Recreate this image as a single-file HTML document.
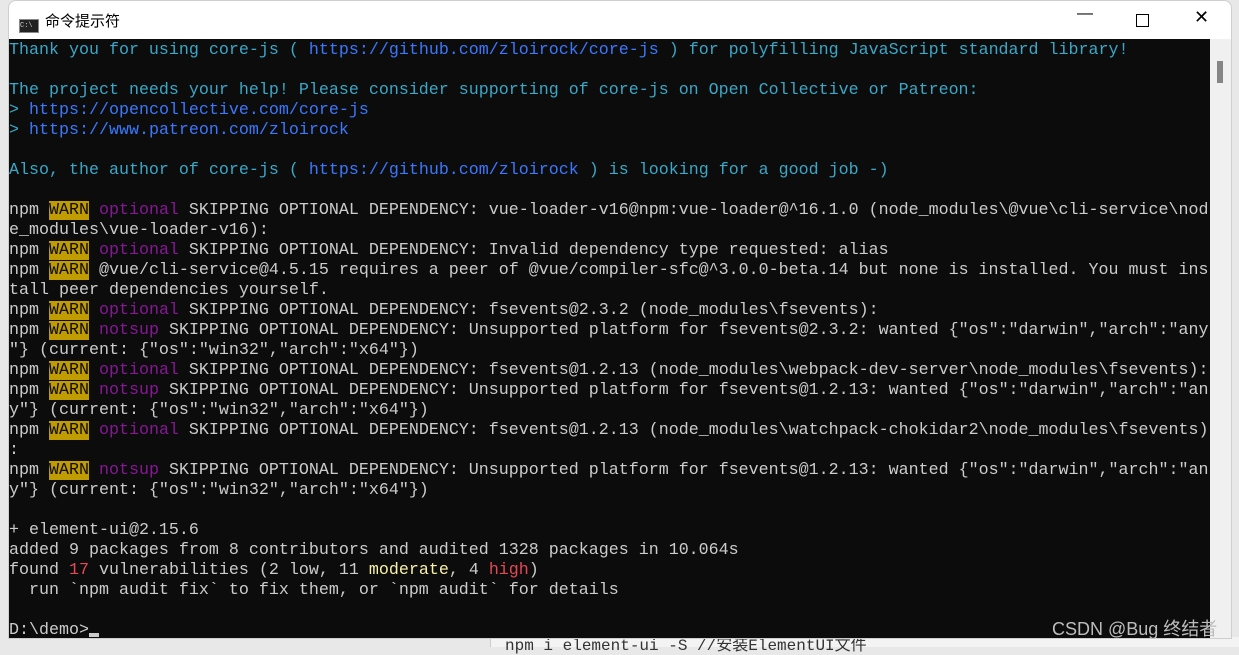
<!DOCTYPE html>
<html><head><meta charset="utf-8"><style>
body{margin:0;width:1239px;height:647px;overflow:hidden;background:#e8e8e8;position:relative;font-family:"Liberation Sans","Noto Sans CJK SC",sans-serif}
.win{position:absolute;left:8px;top:0;width:1222px;height:637px;background:#fff;border-radius:8px 8px 0 0;border:1px solid #cfcfcf;overflow:hidden}
.title{position:absolute;left:10px;top:9px;font-size:15px;color:#000}
.ico{display:inline-block;width:18px;height:12px;background:#222;border:1px solid #888;vertical-align:-1px;margin-right:6px;color:#ccc;font-size:7px;line-height:12px;font-family:"Liberation Mono",monospace}
.term{position:absolute;left:0;top:38px;width:1201px;height:599px;background:#0c0c0c}
.sb{position:absolute;left:1201px;top:38px;width:21px;height:599px;background:#f0f0f0}
.thumb{position:absolute;left:1208px;top:60px;width:6px;height:22px;background:#858585}
pre{margin:0;position:absolute;left:0;top:2px;font-family:"Liberation Mono",monospace;font-size:16.667px;line-height:20px;color:#cccccc}
.c{color:#3aa8c8}.b{color:#3b78ff}.w{background:#c19c00;color:#0c0c0c}.m{color:#881798}.r{color:#e74856}.y{color:#f9f1a5}
.ctl{position:absolute;top:8px;font-size:16px;color:#000}
</style></head><body>
<div style="position:absolute;left:490px;top:637px;width:749px;height:10px;background:#f3f3f3;border-left:1px solid #ccc"></div>
<div style="position:absolute;left:505px;top:631px;font-family:'Liberation Mono',monospace;font-size:16px;color:#333;white-space:nowrap">npm i element-ui -S //安装ElementUI文件</div>
<div class="win">
<div class="title"><span class="ico">C:\</span>命令提示符</div>
<div class="ctl" style="left:1068px;top:4px">—</div>
<div style="position:absolute;left:1127px;top:13px;width:11px;height:11px;border:1px solid #000"></div>
<div class="ctl" style="left:1185px;top:6px;font-size:18px">✕</div>
<div class="term"><pre><span class="c">Thank you for using core-js ( <span class="b">https://github.com/zloirock/core-js</span> ) for polyfilling JavaScript standard library!</span>

<span class="c">The project needs your help! Please consider supporting of core-js on Open Collective or Patreon:</span>
<span class="c">&gt;</span> <span class="b">https://opencollective.com/core-js</span>
<span class="c">&gt;</span> <span class="b">https://www.patreon.com/zloirock</span>

<span class="c">Also, the author of core-js ( <span class="b">https://github.com/zloirock</span> ) is looking for a good job -)</span>

npm <span class="w">WARN</span> <span class="m">optional</span> SKIPPING OPTIONAL DEPENDENCY: vue-loader-v16@npm:vue-loader@^16.1.0 (node_modules\@vue\cli-service\nod
e_modules\vue-loader-v16):
npm <span class="w">WARN</span> <span class="m">optional</span> SKIPPING OPTIONAL DEPENDENCY: Invalid dependency type requested: alias
npm <span class="w">WARN</span> @vue/cli-service@4.5.15 requires a peer of @vue/compiler-sfc@^3.0.0-beta.14 but none is installed. You must ins
tall peer dependencies yourself.
npm <span class="w">WARN</span> <span class="m">optional</span> SKIPPING OPTIONAL DEPENDENCY: fsevents@2.3.2 (node_modules\fsevents):
npm <span class="w">WARN</span> <span class="m">notsup</span> SKIPPING OPTIONAL DEPENDENCY: Unsupported platform for fsevents@2.3.2: wanted {"os":"darwin","arch":"any
"} (current: {"os":"win32","arch":"x64"})
npm <span class="w">WARN</span> <span class="m">optional</span> SKIPPING OPTIONAL DEPENDENCY: fsevents@1.2.13 (node_modules\webpack-dev-server\node_modules\fsevents):
npm <span class="w">WARN</span> <span class="m">notsup</span> SKIPPING OPTIONAL DEPENDENCY: Unsupported platform for fsevents@1.2.13: wanted {"os":"darwin","arch":"an
y"} (current: {"os":"win32","arch":"x64"})
npm <span class="w">WARN</span> <span class="m">optional</span> SKIPPING OPTIONAL DEPENDENCY: fsevents@1.2.13 (node_modules\watchpack-chokidar2\node_modules\fsevents)
:
npm <span class="w">WARN</span> <span class="m">notsup</span> SKIPPING OPTIONAL DEPENDENCY: Unsupported platform for fsevents@1.2.13: wanted {"os":"darwin","arch":"an
y"} (current: {"os":"win32","arch":"x64"})

+ element-ui@2.15.6
added 9 packages from 8 contributors and audited 1328 packages in 10.064s
found <span class="r">17</span> vulnerabilities (2 low, 11 <span class="y">moderate</span>, 4 <span class="r">high</span>)
  run `npm audit fix` to fix them, or `npm audit` for details

D:\demo&gt;<span style="display:inline-block;width:10px;height:4px;background:#ccc;vertical-align:-3px"></span></pre>
</div>
<div class="sb"></div><div class="thumb"></div>
</div>
<div style="position:absolute;left:1052px;top:615px;font-size:18px;color:#bdbdbd;white-space:nowrap">CSDN @Bug 终结者</div>
</body></html>
